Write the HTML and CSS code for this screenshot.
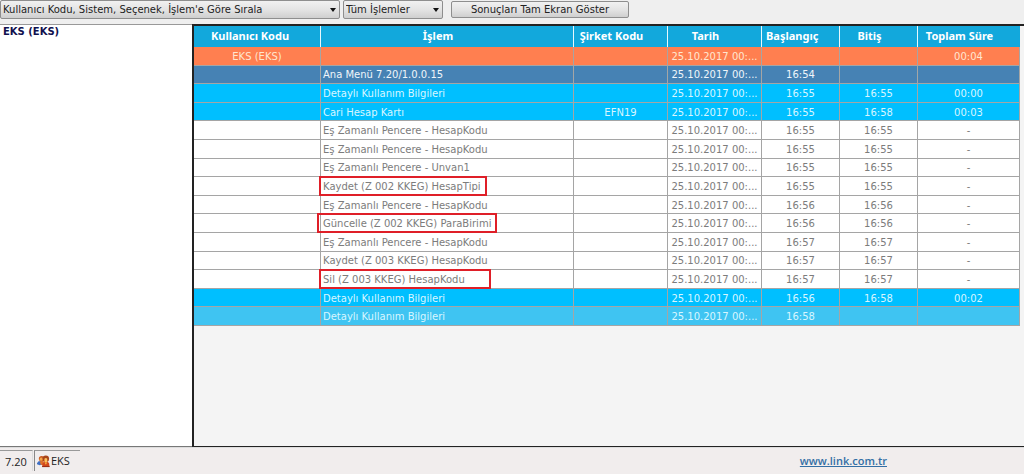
FILE: index.html
```html
<!DOCTYPE html>
<html lang="tr">
<head>
<meta charset="utf-8">
<title>EKS</title>
<link rel="stylesheet" href="styles.css">
</head>
<body>
<header class="toolbar">
  <div class="select select-sort"><select aria-label="Sıralama"><option>Kullanıcı Kodu, Sistem, Seçenek, İşlem'e Göre Sırala</option></select></div>
  <div class="select select-filter"><select aria-label="İşlem filtresi"><option>Tüm İşlemler</option></select></div>
  <button class="full-button" type="button">Sonuçları Tam Ekran Göster</button>
</header>
<main class="workspace">
  <aside class="tree">EKS (EKS)</aside>
  <section class="results">
    <table class="grid">
      <colgroup><col class="c-user"><col class="c-action"><col class="c-company"><col class="c-date"><col class="c-start"><col class="c-end"><col class="c-total"></colgroup>
      <thead><tr><th class="h-user">Kullanıcı Kodu</th><th class="h-action">İşlem</th><th class="h-company">Şirket Kodu</th><th class="h-date">Tarih</th><th class="h-start">Başlangıç</th><th class="h-end">Bitiş</th><th class="h-total">Toplam Süre</th></tr></thead>
      <tbody>
        <tr class="user"><td>EKS (EKS)</td><td></td><td></td><td>25.10.2017 00:...</td><td></td><td></td><td>00:04</td></tr>
        <tr class="menu"><td></td><td>Ana Menü 7.20/1.0.0.15</td><td></td><td>25.10.2017 00:...</td><td>16:54</td><td></td><td></td></tr>
        <tr class="group"><td></td><td>Detaylı Kullanım Bilgileri</td><td></td><td>25.10.2017 00:...</td><td>16:55</td><td>16:55</td><td>00:00</td></tr>
        <tr class="group"><td></td><td>Cari Hesap Kartı</td><td>EFN19</td><td>25.10.2017 00:...</td><td>16:55</td><td>16:58</td><td>00:03</td></tr>
        <tr><td></td><td>Eş Zamanlı Pencere - HesapKodu</td><td></td><td>25.10.2017 00:...</td><td>16:55</td><td>16:55</td><td>-</td></tr>
        <tr><td></td><td>Eş Zamanlı Pencere - HesapKodu</td><td></td><td>25.10.2017 00:...</td><td>16:55</td><td>16:55</td><td>-</td></tr>
        <tr><td></td><td>Eş Zamanlı Pencere - Unvan1</td><td></td><td>25.10.2017 00:...</td><td>16:55</td><td>16:55</td><td>-</td></tr>
        <tr><td></td><td>Kaydet (Z 002 KKEG) HesapTipi<span class="mark mark-save"></span></td><td></td><td>25.10.2017 00:...</td><td>16:55</td><td>16:55</td><td>-</td></tr>
        <tr><td></td><td>Eş Zamanlı Pencere - HesapKodu</td><td></td><td>25.10.2017 00:...</td><td>16:56</td><td>16:56</td><td>-</td></tr>
        <tr><td></td><td>Güncelle (Z 002 KKEG) ParaBirimi<span class="mark mark-update"></span></td><td></td><td>25.10.2017 00:...</td><td>16:56</td><td>16:56</td><td>-</td></tr>
        <tr><td></td><td>Eş Zamanlı Pencere - HesapKodu</td><td></td><td>25.10.2017 00:...</td><td>16:57</td><td>16:57</td><td>-</td></tr>
        <tr><td></td><td>Kaydet (Z 003 KKEG) HesapKodu</td><td></td><td>25.10.2017 00:...</td><td>16:57</td><td>16:57</td><td>-</td></tr>
        <tr><td></td><td>Sil (Z 003 KKEG) HesapKodu<span class="mark mark-delete"></span></td><td></td><td>25.10.2017 00:...</td><td>16:57</td><td>16:57</td><td>-</td></tr>
        <tr class="group"><td></td><td>Detaylı Kullanım Bilgileri</td><td></td><td>25.10.2017 00:...</td><td>16:56</td><td>16:58</td><td>00:02</td></tr>
        <tr class="selected"><td></td><td>Detaylı Kullanım Bilgileri</td><td></td><td>25.10.2017 00:...</td><td>16:58</td><td></td><td></td></tr>
      </tbody>
    </table>
  </section>
</main>
<footer class="status">
  <div class="version">7.20</div>
  <div class="account">
    <svg class="people" viewBox="0 0 14 14" aria-hidden="true">
      <path d="M0 9Q1 6.500 3.500 6.500L6 7V10L3 11L0 10Z" fill="#3f6fc4"/>
      <circle cx="5" cy="4" r="3" fill="#c8571e"/>
      <circle cx="4.500" cy="4.500" r="1.700" fill="#f2a54a"/>
      <path d="M3 7L7 6L7 11L4 10.500Z" fill="#e0702a"/>
      <circle cx="9.500" cy="4" r="3.500" fill="#a8461a"/>
      <path d="M5.500 13L6 8.500Q9.500 5.500 13 8.500L13.500 13Z" fill="#d2481c"/>
      <path d="M8 4Q9.500 2.500 11 4V6Q11 8 9.500 8Q8 8 8 6Z" fill="#ffc15c"/>
      <path d="M8 8L9.500 10.500L11 8Z" fill="#f7b23c"/>
      <path d="M5.500 12.500H13.500" stroke="#8e2a14"/>
    </svg>
    <span>EKS</span>
  </div>
  <div class="site"><a href="#">www.link.com.tr</a></div>
</footer>
</body>
</html>
```
FILE: styles.css
```css
* { box-sizing: border-box; }
body {
  display: flex;
  flex-direction: column;
  min-height: 100vh;
  margin: 0;
  background: #efefef;
  color: #222;
  font: 11px/14px Verdana, "DejaVu Sans", sans-serif;
}
.toolbar {
  display: flex;
  align-items: center;
  gap: 3px;
  height: 24px;
  padding-bottom: 5px;
}
.select { position: relative; height: 19px; }
.select-sort { width: 340px; }
.select-filter { width: 100px; }
.select select,
.full-button {
  width: 100%;
  height: 100%;
  border: 1px solid #8e8e8e;
  border-radius: 2px;
  background: linear-gradient(#f1f1f1, #e4e4e4 50%, #cfcfcf);
  color: #222;
  font: 10px/14px Verdana, "DejaVu Sans", sans-serif;
}
.select select { appearance: none; padding: 1px 16px 0 2px; }
.select::after {
  content: "";
  position: absolute;
  top: 8px;
  right: 4px;
  border: 3px solid transparent;
  border-top: 4px solid #111;
  border-bottom: 0;
  pointer-events: none;
}
.full-button { width: 178px; height: 17px; margin-left: 5px; padding: 0; line-height: 12px; }
.workspace { display: flex; flex: 1; }
.tree {
  width: 192px;
  padding: 0 3px;
  border-top: 1px solid #999;
  border-bottom: 1px solid #777;
  background: #fff;
  color: #10104e;
  font-size: 10px;
  font-weight: bold;
}
.results {
  flex: 1;
  min-width: 0;
  padding-right: 4px;
  border: solid #222;
  border-width: 2px 0 1px 2px;
  background: #f4f4f4;
}
.grid {
  width: 100%;
  height: 300px;
  border-collapse: separate;
  border-spacing: 0;
  table-layout: fixed;
  background: #fff;
}
.c-user { width: 127px; }
.c-company, .c-date { width: 94px; }
.c-start, .c-end { width: 78px; }
.c-total { width: 102px; }
.grid th {
  height: 21px;
  padding: 0 4px 2px;
  border-right: 1px solid #e8f7fc;
  background: #12a8dc;
  color: #fff;
  font: bold 11px/14px "Noto Sans", "Open Sans", sans-serif;
  white-space: nowrap;
}
.grid th:last-child { border-right-color: #12a8dc; }
.grid th.h-user { padding-right: 22px; padding-left: 8px; }
.grid th.h-action { padding-right: 22px; }
.grid th.h-company,
.grid th.h-date,
.grid th.h-start,
.grid th.h-end,
.grid th.h-total { padding-right: 22px; }
.grid td {
  position: relative;
  height: 18px;
  padding: 2px 2px 0;
  border: solid #a5a5a5;
  border-width: 0 1px 1px 0;
  color: #7c7c7c;
  font-size: 10px;
  line-height: 14px;
  text-align: center;
  white-space: nowrap;
}
.grid td:nth-child(2) { text-align: left; }
.grid .user td { background: #ff7f50; color: #ffe6d0; }
.grid .menu td { background: #4682b4; color: #f0f6fa; }
.grid .group td { background: #00bfff; color: #d8f6ff; }
.grid .selected td { background: #3fc4f2; color: #d8f6ff; }
.mark {
  position: absolute;
  z-index: 1;
  top: -1px;
  bottom: -1px;
  left: -2px;
  border: 2px solid #df1f28;
}
.mark-save { width: 168px; }
.mark-update { left: -4px; width: 180px; }
.mark-delete { width: 172px; }
.status {
  display: flex;
  height: 27px;
  padding: 2px 0 3px;
  border-top: 1px solid #ddd;
  background: #f1eded;
  font: 11px/22px "Open Sans", "Noto Sans", sans-serif;
}
.version, .account { border-top: 1px solid #999; }
.version { width: 33px; padding-left: 5px; border-right: 1px solid #ddd; }
.account {
  display: flex;
  align-items: center;
  gap: 1px;
  width: 46px;
  margin-left: 1px;
  padding-left: 2px;
  border-left: 1px solid #888;
}
.people { width: 13px; height: 13px; }
.site { flex: 1; padding-right: 137px; text-align: right; }
.site a { color: #336fa5; font-size: 11px; font-weight: 600; }
```
